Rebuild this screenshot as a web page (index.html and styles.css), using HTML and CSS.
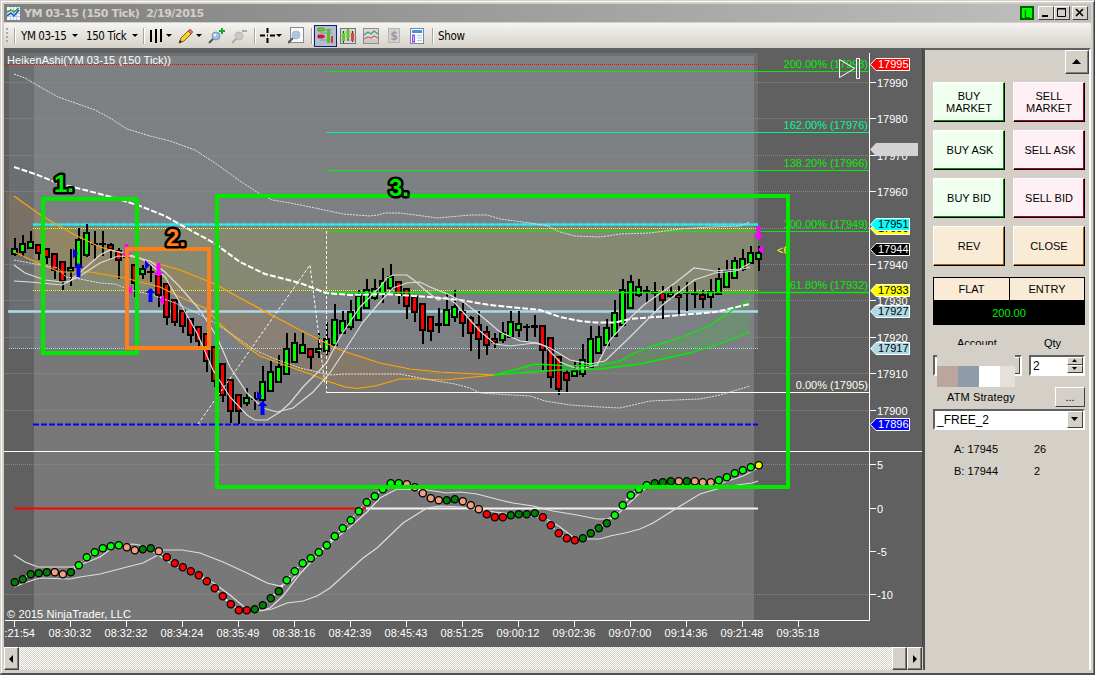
FILE: index.html
```html
<!DOCTYPE html>
<html lang="en">

<head>
    <meta charset="UTF-8">
    <title>YM 03-15 (150 Tick)</title>
    <link rel="stylesheet" href="styles.css">
</head>

<body>
    <div class="window">
        <div class="titlebar">
            <svg class="appIcon" width="13" height="13" viewBox="0 0 13 13">
                <rect width="13" height="13" fill="#eef4fb"/>
                <path d="M0 3.500h13M0 6.500h13M0 9.500h13M3.500 0v13M6.500 0v13M9.500 0v13" stroke="#b9cbe6"/>
                <path d="M0 9l4-3 3 3 5-6" fill="none" stroke="#1d55c4" stroke-width="1.500"/>
                <path d="M0 5l4-2 3 2 5-4" fill="none" stroke="#2aa52a" stroke-width="1.500"/>
            </svg>
            <span class="title">YM 03-15 (150 Tick)&nbsp; 2/19/2015</span>
            <span class="link">L</span>
            <div class="winBtns">
                <span class="winBtn"><svg width="14" height="12"><path d="M3 9h6" stroke="#000" stroke-width="2"/></svg></span>
                <span class="winBtn"><svg width="14" height="12"><path d="M2.500 1.500h8v8h-8zM2 2h9" fill="none" stroke="#000"/></svg></span>
                <span class="winBtn close"><svg width="14" height="12"><path d="M3 2l7 7M10 2l-7 7" stroke="#000" stroke-width="1.600"/></svg></span>
            </div>
        </div>

        <div class="toolbar">
            <span class="grip"></span>
            <span class="sep"></span>
            <span class="tool menu instrument">YM 03-15</span>
            <span class="tool menu interval">150 Tick</span>
            <span class="sep"></span>
            <span class="tool menu bars"><svg width="14" height="16"><path d="M2 2v12M7 1v14M12 1v13" stroke="#000" stroke-width="2"/></svg></span>
            <span class="tool menu pencil"><svg width="16" height="16"><path d="M1 15l2-5 8-8 3 3-8 8z" fill="#f6d32d" stroke="#7b6212"/><path d="M10 3l2-2 3 3-2 2z" fill="#e06a60" stroke="#9a4a45" stroke-width=".7"/><path d="M1 15l1-3 2 2z" fill="#222"/></svg></span>
            <span class="tool glass"><svg width="17" height="17"><path d="M1 16l5-5" stroke="#555" stroke-width="2"/><circle cx="8" cy="9" r="4" fill="#8dc0ea" stroke="#8796a6"/><circle cx="7" cy="8" r="1.500" fill="#e4f3fd"/><path d="M11 4h6M14 1v6" stroke="#12a82c" stroke-width="2"/></svg></span>
            <span class="tool glass"><svg width="17" height="17"><path d="M1 16l5-5" stroke="#aaa" stroke-width="2"/><circle cx="8" cy="9" r="4" fill="#c9c9c9" stroke="#b5b5b5"/><path d="M11 4h5" stroke="#aaa" stroke-width="2"/></svg></span>
            <span class="sep"></span>
            <span class="tool menu cross"><svg width="15" height="15"><path d="M0 7.500h5M10 7.500h5M7.500 0v5M7.500 10v5M7 7.500h1" stroke="#000" stroke-width="2"/></svg></span>
            <span class="tool dataBox"><svg width="16" height="17"><rect x="2.500" y=".5" width="13" height="15" fill="#f8f8f8" stroke="#8a8a8a"/><path d="M0 16l5-5" stroke="#555" stroke-width="2"/><circle cx="8" cy="8" r="4" fill="#a4c8e6" stroke="#b2b8bf"/></svg></span>
            <span class="sep"></span>
            <span class="tool pressed"><svg width="17" height="17"><path d="M5 3h10M3 6h12M3 13h12" stroke="#8790a8"/><path d="M1 1h5l2 1.500-2 1.500h-5z" fill="#62e013" stroke="#2f7a10" stroke-width=".6"/><path d="M1 8h5l2 1.500-2 1.500h-5z" fill="#f01515" stroke="#8f1010" stroke-width=".6"/><path d="M11.500 2v14" stroke="#4fc41b" stroke-width="3"/><path d="M15 9v7" stroke="#cf3b36" stroke-width="2"/></svg></span>
            <span class="tool chartIcon"><svg width="16" height="16"><rect x=".5" y=".5" width="15" height="15" fill="#d6d6d6" stroke="#777"/><path d="M1 4h14M1 8h14M1 12h14" stroke="#bbb"/><path d="M3.500 3v12M8 1v12M12.500 3v11" stroke="#333"/><path d="M3.500 5v8M8 2v8" stroke="#58d31c" stroke-width="3"/><path d="M12.500 5v8" stroke="#e14242" stroke-width="3"/></svg></span>
            <span class="tool chartIcon"><svg width="16" height="16"><rect x=".5" y=".5" width="15" height="15" fill="#d9d9d9" stroke="#8d8d8d"/><path d="M1 12h14M1 14h14" stroke="#bbb"/><path d="M1 7l4-3 3 2 3-3 4 3" fill="none" stroke="#36a071" stroke-width="1.300"/><path d="M1 11l4-2 3 1 3-2 4 2" fill="none" stroke="#e05a5a" stroke-width="1.300"/></svg></span>
            <span class="tool dollar">$</span>
            <span class="tool panelIcon"><svg width="14" height="16"><rect x=".5" y=".5" width="13" height="15" fill="#f7f9fc" stroke="#76879e"/><path d="M2 3.500h10" stroke="#4299d8" stroke-width="3"/><rect x="2.500" y="7" width="2" height="7" fill="#d8baff" stroke="#8b4cf0"/><path d="M7 7.500h5M7 10h5M7 12.500h5" stroke="#b8c8dc"/></svg></span>
            <span class="sep"></span>
            <span class="tool show">Show</span>
        </div>

        <div class="main">
            <div class="chartSide">
                <svg class="chart" id="chart" width="919" height="599" viewBox="4 48 919 599">
                    <defs>
                        <linearGradient id="sky" x1="0" y1="0" x2="0" y2="1">
                            <stop offset="0" stop-color="#8a99a2" stop-opacity=".42"/>
                            <stop offset="1" stop-color="#8a99a8" stop-opacity=".36"/>
                        </linearGradient>
                    </defs>
                    <rect x="4" y="48" width="919" height="599" fill="#606060"/>
                    <rect x="34" y="56" width="720" height="564" fill="#787878"/>
                    <rect x="9" y="53" width="749" height="295" fill="url(#sky)" opacity=".65"/>
                    <rect x="34" y="228" width="724" height="62" fill="#b4b428" fill-opacity=".18"/>
                    <g id="grid"></g>
                    <g id="clouds"></g>
                    <g id="levels"></g>
                    <g id="candles" shape-rendering="crispEdges"></g>
                    <g id="fibs"></g>
                    <g id="lines" fill="none"></g>
                    <g id="signals"></g>
                    <g id="oscillator"></g>
                    <g id="axis"></g>
                    <g id="tags"></g>
                    <text x="7" y="64" class="light" textLength="164">HeikenAshi(YM 03-15 (150 Tick))</text>
                    <text x="7" y="618" class="light" textLength="124">© 2015 NinjaTrader, LLC</text>
                    <path d="M839.500 59.500v18l15-9zM856.500 58.500h3v20h-3z" fill="none" stroke="#fff"/>
                    <text x="777" y="254" fill="#ff0">&lt;6</text>
                    <g id="frames" fill="none" stroke-width="4"></g>
                    <g class="marks">
                        <text x="54" y="192" fill="#00ea00">1.</text>
                        <text x="166" y="246" fill="#ff7f1a">2.</text>
                        <text x="389" y="196" fill="#00ea00">3.</text>
                    </g>
                </svg>
                <div class="scrollbar">
                    <span class="sbBtn"><svg width="12" height="16"><path d="M8 4v8l-4-4z"/></svg></span>
                    <span class="track"></span>
                    <span class="sbBtn"></span>
                    <span class="sbBtn"><svg width="12" height="16"><path d="M5 4v8l4-4z"/></svg></span>
                </div>
            </div>

            <div class="panel">
                <span class="collapse"><svg width="20" height="20"><path d="M6 13h9l-4.500-5z"/></svg></span>
                <div class="orders">
                    <div class="order buy">BUY<br>MARKET</div>
                    <div class="order sell">SELL<br>MARKET</div>
                    <div class="order buy wide">BUY ASK</div>
                    <div class="order sell wide">SELL ASK</div>
                    <div class="order buy">BUY BID</div>
                    <div class="order sell">SELL BID</div>
                    <div class="order flat">REV</div>
                    <div class="order flat">CLOSE</div>
                </div>
                <div class="position">
                    <span>FLAT</span>
                    <span>ENTRY</span>
                    <b>200.00</b>
                </div>
                <div class="row labels">
                    <span class="lblAccount">Account</span>
                    <span class="lblQty">Qty</span>
                </div>
                <div class="row fields">
                    <div class="field account">
                        <span class="arrow"></span>
                        <div class="cover">
                            <i></i><i></i><i></i><i></i>
                        </div>
                    </div>
                    <div class="field qty">2
                        <div class="spin">
                            <span><svg width="13" height="6"><path d="M4 4h5l-2.500-3z"/></svg></span>
                            <span><svg width="13" height="6"><path d="M4 1h5l-2.500 3z"/></svg></span>
                        </div>
                    </div>
                </div>
                <div class="row strategy">
                    <span class="lblAtm">ATM Strategy</span>
                    <span class="more">...</span>
                </div>
                <div class="field combo">_FREE_2
                    <span class="arrow"><svg width="13" height="15"><path d="M3 5h7l-3.500 4z"/></svg></span>
                </div>
                <div class="quotes">
                    <span>A: 17945</span><span>26</span>
                    <span>B: 17944</span><span>2</span>
                </div>
            </div>
        </div>
    </div>
    <script src="chart.js"></script>
</body>

</html>
```

FILE: styles.css
```css
* {
    padding: 0;
    margin: 0;
    box-sizing: border-box;
}

body {
    width: 1095px;
    height: 675px;
    overflow: hidden;
    font: 11px "Liberation Sans", Arial, sans-serif;
    color: #000;
    background: #d4d0c8;
}

.window {
    width: 1095px;
    height: 675px;
    padding: 3px 3px 2px 3px;
    border: 1px solid #d4d0c8;
    border-right: 1px solid #404040;
    border-bottom: 2px solid #505050;
    box-shadow: inset 1px 1px 0 #fff, inset -1px 0 0 #808080;
}

/* title bar */
.titlebar {
    display: flex;
    align-items: center;
    height: 18px;
    width: 1087px;
    padding: 0 3px;
    background: linear-gradient(to right, #808080, #c0c0c0);
}
.titlebar .title {
    margin-left: 4px;
    font: bold 11px "DejaVu Sans", sans-serif;
    letter-spacing: -0.44px;
    color: #d4d0c8;
    flex: 1;
    white-space: nowrap;
}
.titlebar .link {
    width: 14px;
    height: 14px;
    margin-right: 4px;
    border: 2px solid #006000;
    background: #00ff00;
    color: #005000;
    text-align: center;
    line-height: 12px;
}
.winBtns {
    display: flex;
}
.winBtn {
    width: 16px;
    height: 14px;
    background: #d4d0c8;
    border: 1px solid;
    border-color: #fff #404040 #404040 #fff;
}
.winBtn svg {
    display: block;
}
.winBtns .close {
    margin-left: 2px;
}

/* toolbar */
.toolbar {
    display: flex;
    align-items: center;
    width: 1087px;
    height: 26px;
    padding-left: 2px;
    border-top: 1px solid #d4d0c8;
    border-radius: 0 2px 2px 3px;
    background: linear-gradient(#f5f4f1, #d6d2ca);
    font: 11.5px "DejaVu Sans Condensed", "DejaVu Sans", sans-serif;
}
.toolbar svg {
    display: block;
}
.grip {
    width: 2px;
    height: 16px;
    background: repeating-linear-gradient(#aaa 0 2px, transparent 2px 4px);
}
.sep {
    width: 1px;
    height: 16px;
    margin: 0 5px 0 6px;
    background: #a6a6a6;
    box-shadow: 1px 0 0 #fff;
}
.tool {
    flex: none;
    display: flex;
    align-items: center;
    white-space: nowrap;
}
.menu::after {
    content: "";
    margin-left: 4px;
    border: 3px solid transparent;
    border-top: 3px solid #000;
    border-bottom: 0;
}
.instrument {
    width: 66px;
    padding-left: 1px;
    letter-spacing: -0.4px;
}
.instrument::after,
.interval::after {
    margin-left: 6px;
}
.interval {
    width: 51px;
    letter-spacing: -0.4px;
}
.bars::after {
    margin-left: 3px;
}
.pencil {
    margin: 0 6px 0 6px;
}
.pencil::after {
    margin-left: 2px;
}
.glass {
    width: 23px;
}
.glass + .sep {
    margin-left: 0;
}
.cross::after {
    margin-left: 1px;
}
.dataBox {
    margin-left: 6px;
}
.dataBox + .sep {
    margin: 0 2px 0 7px;
}
.pressed {
    width: 23px;
    height: 22px;
    padding: 0 2px;
    border: 1px solid #0a246a;
    background: #b6bdd2;
}
.chartIcon {
    margin-left: 3px;
    margin-right: 4px;
}
.dollar {
    justify-content: center;
    width: 12px;
    height: 15px;
    margin: 0 10px 0 5px;
    background: #d2d2d2;
    border: 1px solid #b4b4b4;
    font-weight: bold;
    color: #999;
}
.panelIcon + .sep {
    margin-left: 8px;
}
.show {
    letter-spacing: -0.3px;
}

.main {
    display: flex;
    width: 1088px;
    height: 622px;
}

/* chart */
.chartSide {
    width: 919px;
}
.chart {
    display: block;
    font: 11px "Liberation Sans", Arial, sans-serif;
}
.chart .light {
    fill: #fff;
}
.marks {
    font: bold 24px "Liberation Sans", Arial, sans-serif;
    stroke: #000;
    stroke-width: 5px;
    stroke-linejoin: round;
    paint-order: stroke;
}
.scrollbar {
    display: flex;
    height: 23px;
    padding: 0 1px 0 0;
}
.sbBtn {
    width: 15px;
    height: 23px;
    padding-top: 3px;
    background: #d4d0c8;
    border: 1px solid;
    border-color: #fff #404040 #404040 #fff;
    box-shadow: inset -1px -1px 0 #808080;
}
.track {
    flex: 1;
    background: conic-gradient(#d4d0c8 25%, #fff 0 50%, #d4d0c8 0 75%, #fff 0) 0 0 / 2px 2px;
}

/* order entry panel */
.panel {
    width: 168px;
    padding: 0 3px 0 8px;
    border-left: 2px solid #505050;
    border-top: 2px solid #606060;
    border-right: 2px solid #fff;
    background: #d4d0c8;
}
.collapse {
    display: block;
    width: 24px;
    height: 24px;
    margin-left: 132px;
    border: 1px solid;
    border-color: #fff #404040 #404040 #fff;
    box-shadow: inset -1px -1px 0 #808080;
}
.orders {
    display: grid;
    grid-template-columns: 72px 72px;
    grid-auto-rows: 40px;
    gap: 8px;
    margin-top: 8px;
}
.order {
    display: flex;
    align-items: center;
    justify-content: center;
    text-align: center;
    line-height: 12px;
    border: 1px solid;
    border-color: #fff #000 #000 #fff;
}
.order.wide {
    padding-left: 2px;
}
.buy {
    background: #f0fff0;
    box-shadow: inset -1px -1px 0 #009000;
}
.sell {
    background: #fff0f5;
    box-shadow: inset -1px -1px 0 #a00035;
}
.flat {
    background: #faebd7;
    box-shadow: inset -1px -1px 0 #9a6420;
}
.position {
    display: grid;
    grid-template-columns: 76px 74px;
    grid-template-rows: 22px 24px;
    width: 152px;
    height: 48px;
    margin-top: 11px;
    border: 1px solid #000;
    background: #000;
    text-align: center;
    line-height: 22px;
}
.position span {
    background: #faebd7;
}
.position span:first-child {
    border-right: 1px solid #000;
}
.position b {
    grid-column: 1 / 3;
    font-weight: normal;
    line-height: 26px;
    color: #00f000;
}
.row {
    display: flex;
    width: 152px;
}
.labels {
    height: 20px;
    margin-top: 10px;
    line-height: 16px;
}
.lblAccount {
    width: 87px;
    padding-left: 24px;
}
.lblQty {
    padding-left: 24px;
}
.field {
    display: flex;
    justify-content: space-between;
    height: 21px;
    padding-left: 2px;
    background: #fff;
    border: 2px solid;
    border-color: #606060 #fff #fff #606060;
    line-height: 18px;
    font-size: 12px;
}
.account {
    width: 89px;
    margin-right: 7px;
    position: relative;
}
/* privacy blocks over the account name */
.cover {
    position: absolute;
    left: 2px;
    top: -12px;
    width: 78px;
    height: 42px;
    padding-top: 21px;
    display: flex;
    background: #d4d0c8;
}
.cover i {
    width: 21px;
    background: #bba59d;
}
.cover i:nth-child(2) {
    background: #8e9ba8;
}
.cover i:nth-child(3) {
    background: #fff;
}
.cover i:nth-child(4) {
    width: 15px;
    background: #e5e0da;
}
.qty {
    width: 56px;
}
.spin span {
    display: block;
    width: 16px;
    height: 8px;
    background: #d4d0c8;
    border: 1px solid;
    border-color: #fff #404040 #404040 #fff;
}
.spin svg,
.arrow svg {
    display: block;
}
.arrow {
    width: 16px;
    height: 17px;
    background: #d4d0c8;
    border: 1px solid;
    border-color: #fff #404040 #404040 #fff;
}
.account .arrow {
    margin-left: auto;
}
.strategy {
    justify-content: space-between;
    padding-left: 14px;
    margin-top: 11px;
    line-height: 20px;
}
.lblAtm {
    letter-spacing: 0.12px;
}
.more {
    width: 30px;
    height: 20px;
    border: 1px solid;
    border-color: #fff #404040 #404040 #fff;
    text-align: center;
    line-height: 18px;
}
.combo {
    width: 152px;
    margin-top: 2px;
}
.quotes {
    display: grid;
    grid-template-columns: 80px 40px;
    grid-auto-rows: 22px;
    margin: 8px 0 0 21px;
    line-height: 22px;
}
```

FILE: chart.js
```js
var NS = 'http://www.w3.org/2000/svg';

function add(parent, tag, attrs, text) {
    var el = document.createElementNS(NS, tag);
    for (var key in attrs) {
        el.setAttribute(key, attrs[key]);
    }
    if (text !== undefined) el.textContent = text;
    document.getElementById(parent).appendChild(el);
    return el;
}

function hline(parent, x1, x2, y, color, width, dash) {
    add(parent, 'path', {
        d: 'M' + x1 + ' ' + y + 'H' + x2,
        stroke: color,
        'stroke-width': width || 1,
        'stroke-dasharray': dash || 'none'
    });
}

function barX(i) {
    return 14 + i * 8;
}

// high, body top, body bottom, low, colour (d = doji)
var bars = [
    [238,248,255,256,'g'],[235,243,253,257,'g'],[231,241,249,249,'g'],[244,244,254,260,'r'],[248,248,258,264,'r'],
    [253,253,271,279,'r'],[261,261,282,290,'r'],[249,267,272,286,'g'],[228,239,268,272,'g'],[224,232,256,257,'g'],
    [231,243,245,259,'d'],[231,243,245,256,'d'],[243,244,250,259,'r'],[248,250,261,279,'r'],[247,256,258,276,'d'],
    [264,264,284,297,'r'],[265,268,275,279,'g'],[265,271,273,282,'d'],[275,275,296,307,'r'],[283,283,318,325,'r'],
    [299,299,323,326,'r'],[310,310,327,333,'r'],[318,318,336,343,'r'],[326,326,342,346,'r'],[333,333,362,372,'r'],
    [346,346,382,387,'r'],[363,363,396,402,'r'],[379,379,412,423,'r'],[394,394,412,424,'r'],[388,397,404,406,'g'],
    [392,398,400,410,'d'],[366,381,401,402,'g'],[361,371,392,392,'g'],[355,366,383,383,'g'],[333,348,375,375,'g'],
    [333,342,363,363,'g'],[333,344,354,354,'g'],[348,348,358,369,'r'],[333,348,353,358,'g'],[322,338,352,355,'g'],
    [304,319,346,346,'g'],[311,320,334,334,'g'],[300,311,328,330,'g'],[290,295,321,321,'g'],[279,289,309,309,'g'],
    [279,288,299,300,'g'],[268,280,294,303,'g'],[264,276,289,291,'g'],[281,281,296,304,'r'],[288,288,307,319,'r'],
    [296,296,313,322,'r'],[303,303,331,344,'r'],[316,316,332,341,'r'],[308,323,326,333,'d'],[294,309,326,326,'g'],
    [290,306,318,322,'g'],[303,311,324,337,'r'],[316,317,334,351,'r'],[311,324,340,359,'r'],[326,331,346,355,'r'],
    [333,338,343,348,'r'],[322,332,341,343,'g'],[311,321,338,338,'g'],[311,323,331,337,'g'],[324,326,328,341,'d'],
    [315,325,328,337,'d'],[325,325,351,370,'r'],[337,337,378,388,'r'],[356,356,390,395,'r'],[369,372,381,392,'r'],
    [362,370,377,377,'g'],[344,359,375,377,'g'],[326,338,368,368,'g'],[326,336,354,354,'g'],[319,327,346,346,'g'],
    [300,312,337,337,'g'],[279,289,326,326,'g'],[275,281,309,309,'g'],[279,286,296,297,'g'],[286,290,292,303,'d'],
    [282,291,294,311,'d'],[286,292,301,319,'r'],[286,292,297,299,'g'],[286,294,298,314,'r'],[282,292,294,311,'d'],
    [282,293,295,308,'d'],[290,294,300,308,'r'],[279,291,298,308,'g'],[268,278,295,295,'g'],[260,270,288,288,'g'],
    [257,260,279,279,'g'],[249,258,270,271,'g'],[246,252,264,264,'g'],[246,252,260,271,'g']
];

// grid lines and price scale
var prices = [[82,17990],[118,17980],[155,17970],[191,17960],[264,17940],[300,17930],[337,17920],[373,17910],[410,17900]];
prices.forEach(function (p) {
    hline('grid', 5, 869, p[0] + 0.5, '#8a8a8a', 1, '1 1');
    hline('axis', 870, 876, p[0] + 0.5, '#fff');
    add('axis', 'text', {x: 877, y: p[0] + 5, 'class': 'light'}, p[1]);
});
[[464,'5'],[508,'0'],[551,'-5'],[594,'-10']].forEach(function (p) {
    hline('axis', 870, 876, p[0] + 0.5, '#fff');
    add('axis', 'text', {x: 877, y: p[0] + 5, 'class': 'light'}, p[1]);
});
hline('grid', 758, 869, 228.5, '#8a8a8a', 1, '1 1');
hline('grid', 5, 869, 464.5, '#8a8a8a', 1, '1 1');
hline('grid', 5, 869, 594.5, '#8a8a8a', 1, '1 1');
add('axis', 'path', {d: 'M5 620.5H869.5V53M4 451.5H923', fill: 'none', stroke: '#fff'});
add('axis', 'path', {d: 'M922.5 48V647', stroke: '#444'});

var times = [':21:54','08:30:32','08:32:32','08:34:24','08:35:49','08:38:16','08:42:39','08:45:43','08:51:25','09:00:12','09:02:36','09:07:00','09:14:36','09:21:48','09:35:18'];
times.forEach(function (t, i) {
    var x = 14 + i * 56;
    add('axis', 'path', {d: 'M' + (x + 0.5) + ' 621v6', stroke: '#fff'});
    add('axis', 'text', {x: i ? x : 35, y: 637, 'class': 'light', 'text-anchor': i ? 'middle' : 'end'}, t);
});

// horizontal levels
hline('levels', 4, 758, 64.5, '#f00', 1, '1 1');
hline('levels', 33, 758, 224.5, '#7fc4c6', 2);
hline('levels', 33, 758, 224.5, '#0ff', 2, '6 2');
hline('levels', 33, 758, 228.5, '#ff0', 1, '1 1');
hline('levels', 33, 758, 290.5, '#ff0', 1, '1 1');
hline('levels', 8, 758, 311.5, '#9fc4d0', 3);
hline('levels', 8, 758, 311.5, '#add8e6', 1);
hline('levels', 9, 758, 348.5, '#add8e6', 1, '1 1');
hline('levels', 33, 758, 424.5, '#00f', 2, '6 2');

bars.forEach(function (b, i) {
    var x = barX(i);
    add('candles', 'rect', {x: x, y: b[0], width: 2, height: b[3] - b[0], fill: '#000'});
    add('candles', 'rect', {x: x - 3, y: b[1], width: 7, height: b[2] - b[1], fill: '#000'});
    if (b[4] != 'd') {
        add('candles', 'rect', {x: x - 1, y: b[1] + 2, width: 3, height: Math.max(b[2] - b[1] - 4, 1), fill: b[4] == 'g' ? '#00ff00' : '#ff0000'});
    }
});

// fibonacci levels
[
    [71,'200.00% (17993)','#00f000'],[132,'162.00% (17976)','#00fa8a'],[170,'138.20% (17966)','#00f000'],
    [231,'100.00% (17949)','#00f000'],[292,'61.80% (17932)','#00f000'],[392,'0.00% (17905)','#fffff0']
].forEach(function (f) {
    hline('fibs', 326, 869, f[0] + 0.5, f[2], f[0] == 292 ? 1.6 : 1);
    add('fibs', 'text', {x: 868, y: f[0] - 3, fill: f[2], 'text-anchor': 'end'}, f[1]);
});
add('fibs', 'path', {d: 'M326.5 231V392', stroke: '#fffff0', 'stroke-dasharray': '3 2'});
add('fibs', 'path', {d: 'M198 424L310 265L325 385', fill: 'none', stroke: '#fffff0', 'stroke-dasharray': '3 2'});

// moving averages and bands
var orangeTop = '14,196 42,216 75,235 100,247 118,252 140,259 170,267 180,270 215,284 240,298 300,330 340,350 380,363 410,369 440,372 494,375';
var orangeLow = '14,252 40,264 60,272 90,272 125,278 140,282 160,287 180,297 205,308 222,326 240,342 260,356 290,367 310,374 330,382 345,387 357,388.5 375,386 400,379 420,379 445,380 494,375';
var greenTop = '494,375 510,371 535,364 570,366 600,365 620,361 632,354 655,345 680,338 710,325 750,299';
var greenLow = '494,375 530,372 560,370 600,369 640,364 690,353 725,342 750,332';

function cloud(top, low, color) {
    var back = low.split(' ').reverse().join(' ');
    add('clouds', 'polygon', {points: top + ' ' + back, fill: color, 'fill-opacity': 0.17});
}
cloud('6,191 ' + orangeTop, '6,248 ' + orangeLow, '#c88030');
cloud(greenTop, greenLow, '#32cd32');

function line(points, color, width, dash) {
    add('lines', 'polyline', {points: points, stroke: color, 'stroke-width': width || 1, 'stroke-dasharray': dash || 'none'});
}
line(orangeTop, '#ffa500', 1.2);
line(orangeLow, '#ffa500', 1.2);
line(greenTop, '#00f000', 1.3);
line(greenLow, '#00f000', 1.3);
line('14,74 25,78 42,88 58,97 78,104 95,110 110,118 127,129 150,136 170,141 195,150 215,163 240,181 260,194 272,200 290,203 320,209 343,214 370,216 378,215 385,213 400,213 438,218 470,215 487,215 500,219 530,223 548,226 560,232 575,236 600,237 620,234 650,233 680,229 710,227 740,226 750,222', '#e2e2e2', 1, '2 1');
line('14,260 40,265 58,268 66,277 80,279 100,283 115,284 130,290 150,294 175,303 195,312 210,320 230,333 255,350 275,359 300,368 330,375 345,374 400,374 430,380 455,384 470,388 480,393 530,396 545,401 570,405 600,407 620,408 650,401 700,399 720,395 750,386', '#e2e2e2', 1, '2 1');
line('14,167 35,174 60,184 85,190 115,198 140,206 165,216 190,230 214,243 240,262 265,274 300,283 326,293 350,295 385,294 430,297 460,300 490,305 520,308 540,310 560,317 580,321 595,322.5 615,322.5 630,319 680,315 715,312 750,304', '#fff', 2, '6 2');
line('14,265 25,273 45,280 62,282 70,281 85,268 100,255 110,250 120,252 140,258 150,264 165,277 180,303 197,333 213,370 230,397 247,415 255,420 267,420 280,412 290,403 303,387 320,370 327,362 340,337 360,307 380,287 387,278 393,275 407,275 415,281 425,290 438,300 446,297 455,303 470,320 480,331 495,344 510,346 535,343 545,346 560,362 575,368 585,368 597,365 610,340 630,318 645,304 655,297 675,283 694,268 715,271 740,269 750,263', '#ddd', 1.2);
line('14,281 30,282 62,285 80,276 100,263 118,256 135,257 150,261 165,272 180,287 200,310 217,337 230,367 247,393 263,408 277,412 293,408 313,392 330,373 347,347 363,322 380,302 393,288 407,283 420,282 430,287 450,295 465,303 480,315 500,332 520,341 538,343 550,348 570,360 590,364 605,361 630,337 660,307 694,280 715,273 735,271 750,267', '#ddd', 1.2);

// trade signals
function arrow(x, y, dir, color) {
    var s = dir == 'up' ? 1 : -1;
    add('signals', 'path', {d: 'M' + x + ' ' + y + 'l5 ' + 5 * s + 'h-3v' + 9 * s + 'h-4v' + -9 * s + 'h-3z', fill: color});
}
function triangle(x, y, dir, color) {
    add('signals', 'path', {d: 'M' + x + ' ' + y + 'l' + -5 * dir + ' -5v10z', fill: color});
}
arrow(78.5, 263, 'up', '#00f');
arrow(150.5, 288, 'up', '#00f');
arrow(262.5, 401, 'up', '#00f');
arrow(126.5, 258, 'down', '#f0f');
arrow(158.5, 277, 'down', '#f0f');
arrow(758.5, 240, 'down', '#f0f');
triangle(78, 253.5, 1, '#00f');
triangle(150, 265, 1, '#00f');
triangle(262, 396, 1, '#00f');
triangle(127, 290, -1, '#f0f');
triangle(159, 300, -1, '#f0f');
triangle(758, 249.5, -1, '#f0f');

// oscillator pane
hline('oscillator', 14, 366, 508.5, '#f00', 2);
hline('oscillator', 366, 758, 508.5, '#f4f4f4', 2);
function oscLine(points, width, dash) {
    add('oscillator', 'polyline', {points: points, fill: 'none', stroke: width ? '#fff' : '#ddd', 'stroke-width': width || 1.2, 'stroke-dasharray': dash || 'none'});
}
oscLine('14,555 25,562 38,567 72,567 80,565 100,557 115,546 133,544 145,546 155,553 175,566 200,575 215,584 230,595 243,606 258,611 270,608 283,596 300,574 318,554 330,543 350,527 367,512 380,498 397,489 427,490 447,493 460,492 477,494 500,500 513,503 533,506 553,511 577,515 597,519 607,519 617,515 624,508 643,490 657,486 713,486 743,476 758,468');
oscLine('14,587 27,582 40,578 70,579 80,577 100,574 127,567 143,563 158,555 162,550 182,550 200,553 223,562 247,573 267,583 280,586 290,582 300,571');
oscLine('260,611 272,609 287,603 303,601 317,596 330,588 363,558 377,548 403,523 427,508 440,506 460,507 477,509 495,512 545,518 560,527 573,537 587,539 600,539 610,536 625,533 640,529 653,523 677,508 700,494 717,489 737,485 752,483 758,481');

var osc = [
    426,417,402,399,396,396,402,396,375,351,336,324,318,315,321,330,327,324,333,351,369,381,393,405,423,444,468,492,510,510,507,495,474,453,
    420,393,369,354,336,315,288,264,240,213,186,168,147,129,129,132,141,159,174,180,180,177,183,195,207,222,231,231,225,222,222,219,231,255,
    279,294,300,294,279,264,249,225,195,165,147,135,129,126,123,123,123,123,126,126,120,111,99,90,81,75
];
var oscColors = 'dddddssdllllllssddsrrrrrrrrrrrddddlllllllllllllllsssssddsssrrrddddrrrrrddddllllldddsdsssllllly';
var fills = {d: '#007f00', l: '#00ff00', s: '#f4a080', r: '#ff0000', y: '#ffff00'};
oscLine(osc.map(function (v, i) {
    return (barX(i) + 0.5) + ',' + (440 + v / 3);
}).join(' '), 2, '2 2');
osc.forEach(function (v, i) {
    add('oscillator', 'circle', {cx: barX(i) + 0.8, cy: 440.3 + v / 3, r: 3.6, fill: fills[oscColors[i]], stroke: '#000', 'stroke-width': 1.3});
});

// price markers on the scale
function tag(y, label, fill, color, w) {
    var right = w || 909.5;
    add('tags', 'path', {d: 'M870.5 ' + y + 'L876 ' + (y - 6) + 'H' + right + 'V' + (y + 6) + 'H876z', fill: fill, stroke: w ? fill : '#fff'});
    add('tags', 'text', {x: 878, y: y + 3.5, fill: color}, label);
}
tag(64.5, '17995', '#f00', '#fff');
tag(149.5, '', '#d3d3d3', '#000', 917.5);
tag(228.5, '17950', '#ff0', '#000');
tag(224.5, '17951', '#0ff', '#000');
tag(249.5, '17944', '#000', '#fff');
tag(290.5, '17933', '#ff0', '#000');
tag(311.5, '17927', '#add8e6', '#000');
tag(348.5, '17917', '#add8e6', '#000');
tag(424.5, '17896', '#00f', '#fff');

// highlighted areas
add('frames', 'rect', {x: 43, y: 199, width: 94, height: 154, stroke: '#00ea00'});
add('frames', 'rect', {x: 127, y: 249, width: 82, height: 99, stroke: '#ff7f1a'});
add('frames', 'rect', {x: 217, y: 196, width: 571, height: 291, stroke: '#00ea00'});
```
